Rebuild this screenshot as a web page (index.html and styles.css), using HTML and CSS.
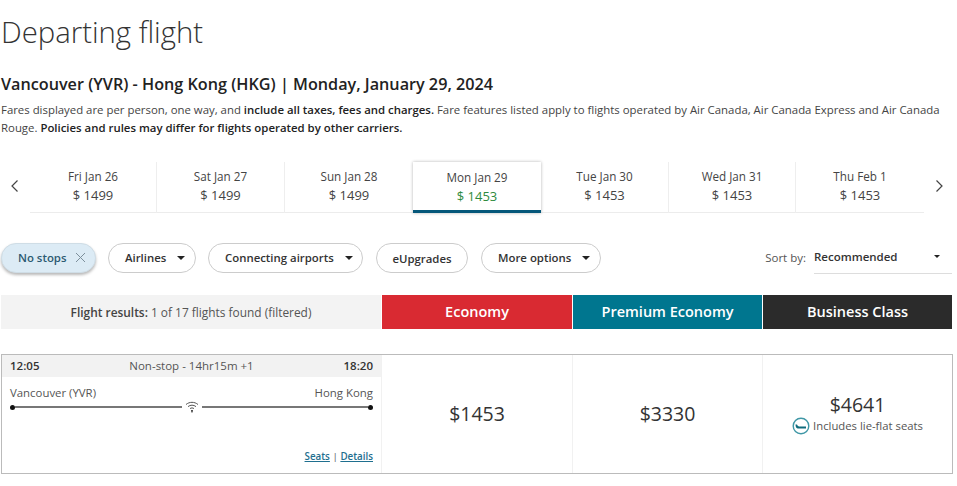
FILE: index.html
```html
<!DOCTYPE html>
<html lang="en">
<head>
<meta charset="utf-8">
<title>Departing flight</title>
<link rel="stylesheet" href="styles.css">
</head>
<body>
<main class="page">
  <h1 class="title">Departing flight</h1>
  <h2 class="route">Vancouver (YVR) - Hong Kong (HKG) | Monday, January 29, 2024</h2>
  <p class="note">Fares displayed are per person, one way, and <b>include all taxes, fees and charges.</b> Fare features listed apply to flights operated by Air Canada, Air Canada Express and Air Canada Rouge. <b>Policies and rules may differ for flights operated by other carriers.</b></p>

  <div class="dates">
    <svg class="chev" width="10" height="14" viewBox="0 0 10 14"><path d="M7.500 1.500 2 7l5.500 5.500" fill="none" stroke="#444" stroke-width="1.200"/></svg>
    <div class="strip">
      <div class="day"><span>Fri Jan 26</span><span>$ 1499</span></div>
      <div class="day"><span>Sat Jan 27</span><span>$ 1499</span></div>
      <div class="day"><span>Sun Jan 28</span><span>$ 1499</span></div>
      <div class="day day-on"><span>Mon Jan 29</span><span class="green">$ 1453</span></div>
      <div class="day"><span>Tue Jan 30</span><span>$ 1453</span></div>
      <div class="day"><span>Wed Jan 31</span><span>$ 1453</span></div>
      <div class="day"><span>Thu Feb 1</span><span>$ 1453</span></div>
    </div>
    <svg class="chev" width="10" height="14" viewBox="0 0 10 14"><path d="M2.500 1.500 8 7l-5.500 5.500" fill="none" stroke="#444" stroke-width="1.200"/></svg>
  </div>

  <div class="filters">
    <button class="pill pill-on">No stops
      <svg width="11" height="11" viewBox="0 0 11 11"><path d="M1 1l9 9M10 1l-9 9" stroke="#7d8f9b" stroke-width="1"/></svg>
    </button>
    <button class="pill pill-airlines">Airlines <i class="caret"></i></button>
    <button class="pill pill-conn">Connecting airports <i class="caret"></i></button>
    <button class="pill pill-up">eUpgrades</button>
    <button class="pill pill-more">More options <i class="caret"></i></button>
    <div class="sort">
      <span class="sort-label">Sort by:</span>
      <div class="select">Recommended <i class="caret caret-small"></i></div>
    </div>
  </div>

  <div class="heads">
    <div class="head-info"><b>Flight results:</b>&nbsp;1 of 17 flights found (filtered)</div>
    <div class="head head-eco">Economy</div>
    <div class="head head-prem">Premium Economy</div>
    <div class="head head-biz">Business Class</div>
  </div>

  <div class="card">
    <div class="itin">
      <div class="times"><b>12:05</b><span>Non-stop - 14hr15m +1</span><b>18:20</b></div>
      <div class="cities"><span>Vancouver (YVR)</span><span>Hong Kong</span></div>
      <div class="line">
        <i class="dot"></i><i class="seg"></i>
        <svg class="wifi" width="14" height="12" viewBox="0 0 14 12"><path d="M1 3.500C4.500.6 9.500.6 13 3.500M3 5.600c2.400-1.900 5.600-1.900 8 0M5 7.600c1.200-.9 2.800-.9 4 0" fill="none" stroke="#555" stroke-width="1"/><path d="M6 9h2l-.4 2.500h-1.200z" fill="#444"/></svg>
        <i class="seg"></i><i class="dot"></i>
      </div>
      <div class="links"><a href="#">Seats</a> | <a href="#">Details</a></div>
    </div>
    <div class="fare fare-eco">$1453</div>
    <div class="fare fare-prem">$3330</div>
    <div class="fare fare-biz">
      <span>$4641</span>
      <span class="flat">
        <svg width="18" height="18" viewBox="0 0 18 18"><circle cx="9" cy="9" r="7.800" fill="#fff" stroke="#3f97a6" stroke-width="1.400"/><path d="M3.500 7.500h1.500c.6 1.500 1.500 2 3 2h6v2H6c-1.500 0-2.500-1.500-2.500-4z" fill="#0f6b7c"/></svg>
        Includes lie-flat seats
      </span>
    </div>
  </div>
</main>
</body>
</html>
```

FILE: styles.css
```css
* { box-sizing: border-box; }
html, body { margin: 0; padding: 0; background: #fff; overflow: hidden; }
body { font-family: "Open Sans", sans-serif; color: #333; width: 957px; height: 486px; }
.page { padding: 12px 5px 0 1px; }
.title { margin: 0; font-size: 29.300px; line-height: 41px; font-weight: 300; color: #333; }
.route { margin: 19px 0 0; font-size: 16.200px; line-height: 24px; font-weight: 600; color: #222; }
.note { margin: 5px 0 0; font-size: 11.400px; line-height: 18px; color: #444; width: 950px; }
.note b { font-weight: 600; color: #222; }

.dates { display: flex; align-items: center; margin-top: 25px; height: 51px; padding-left: 9px; }
.chev { flex: none; margin-bottom: 3px; }
.strip { display: grid; grid-template-columns: 127px 128px 128px 128px 128px 127px 128px; width: 894px; margin: 0 10px; height: 51px; border-bottom: 1px solid #ececec; }
.day { display: flex; flex-direction: column; align-items: center; padding-top: 5px; font-size: 11.700px; line-height: 19px; color: #444; border-right: 1px solid #eee; }
.day:last-child, .day:nth-child(3) { border-right: 0; }
.day span + span { font-size: 13px; }
.day-on { padding-top: 6px; border-right: 0; box-shadow: 0 0 3px rgba(0,0,0,.3); border-bottom: 3px solid #05577a; height: 51px; }
.green { color: #2e8b3d; }

.filters { display: flex; align-items: center; margin-top: 29px; height: 32px; }
.pill { display: flex; align-items: center; height: 30px; padding: 0 0 1px 16px; font: 600 11.400px "Open Sans", sans-serif; color: #333; background: #fff; border: 1px solid #ccc; border-radius: 15px; flex: none; }
.pill-on { width: 95px; margin-right: 12px; gap: 9px; background: #dcebf5; color: #2c5a72; border-color: #cfdde6; box-shadow: 0 2px 3px rgba(0,0,0,.28); }
.pill-airlines { width: 88px; margin-right: 12px; gap: 11px; }
.pill-conn { width: 155px; margin-right: 13px; gap: 11px; }
.pill-up { width: 92px; margin-right: 13px; justify-content: center; padding: 0; }
.pill-more { width: 120px; gap: 11px; }
.caret { display: inline-block; width: 0; height: 0; border: 4px solid transparent; border-top-color: #222; border-bottom: 0; }
.caret-small { border-width: 3px; border-bottom: 0; }
.sort { display: flex; margin-left: auto; align-items: flex-start; height: 32px; }
.sort-label { font-size: 11.500px; line-height: 30px; color: #555; margin-right: 8px; padding-top: 1px; }
.select { display: flex; justify-content: space-between; align-items: center; width: 138px; height: 32px; padding: 0 12px 2px 0; font-size: 11.500px; font-weight: 600; color: #333; border-bottom: 1px solid #ddd; }

.heads { display: grid; grid-template-columns: 380px 190px 189px 189px; gap: 0 1px; margin-top: 21px; height: 34px; }
.head-info { display: flex; align-items: center; justify-content: center; background: #f3f3f3; font-size: 11.900px; color: #555; padding-bottom: 1px; }
.head-info b { font-weight: 600; color: #444; }
.head { display: flex; align-items: center; justify-content: center; font-size: 14.500px; font-weight: 600; color: #fff; padding-bottom: 1px; }
.head-eco { background: #d92a32; }
.head-prem { background: #00768f; }
.head-biz { background: #2b2b2b; }

.card { display: grid; grid-template-columns: 379px 190px 189px 189px; gap: 0 1px; margin-top: 25px; width: 952px; height: 120px; border: 1px solid #bbb; background: #f1f1f1; }
.itin { background: #fff; display: flex; flex-direction: column; }
.times { display: flex; justify-content: space-between; height: 22px; padding: 0 8px 2px; align-items: center; background: #f2f2f2; font-size: 11.500px; color: #555; }
.times b { font-weight: 600; color: #333; }
.cities { display: flex; justify-content: space-between; padding: 7px 8px 0; font-size: 11.400px; line-height: 17px; color: #555; }
.line { display: flex; align-items: center; margin: -1px 8px 0 8px; height: 14px; }
.dot { width: 5px; height: 5px; border-radius: 50%; background: #111; flex: none; }
.seg { flex: 1; height: 2px; background: #777; }
.wifi { flex: none; margin: 0 3px; }
.links { margin-top: auto; padding: 0 8px 9px 0; text-align: right; font-size: 9.800px; font-weight: 400; line-height: 14px; color: #555; }
.links a { color: #1f6f8f; text-decoration: underline; font-weight: 600; }
.fare { display: flex; flex-direction: column; align-items: center; justify-content: center; background: #fff; font-size: 19.500px; color: #333; padding-bottom: 1px; }
.fare-biz { line-height: 26px; padding-bottom: 2px; }
.flat { display: flex; align-items: center; gap: 3px; font-size: 11.300px; line-height: 18px; color: #555; margin-top: -1px; }
```
